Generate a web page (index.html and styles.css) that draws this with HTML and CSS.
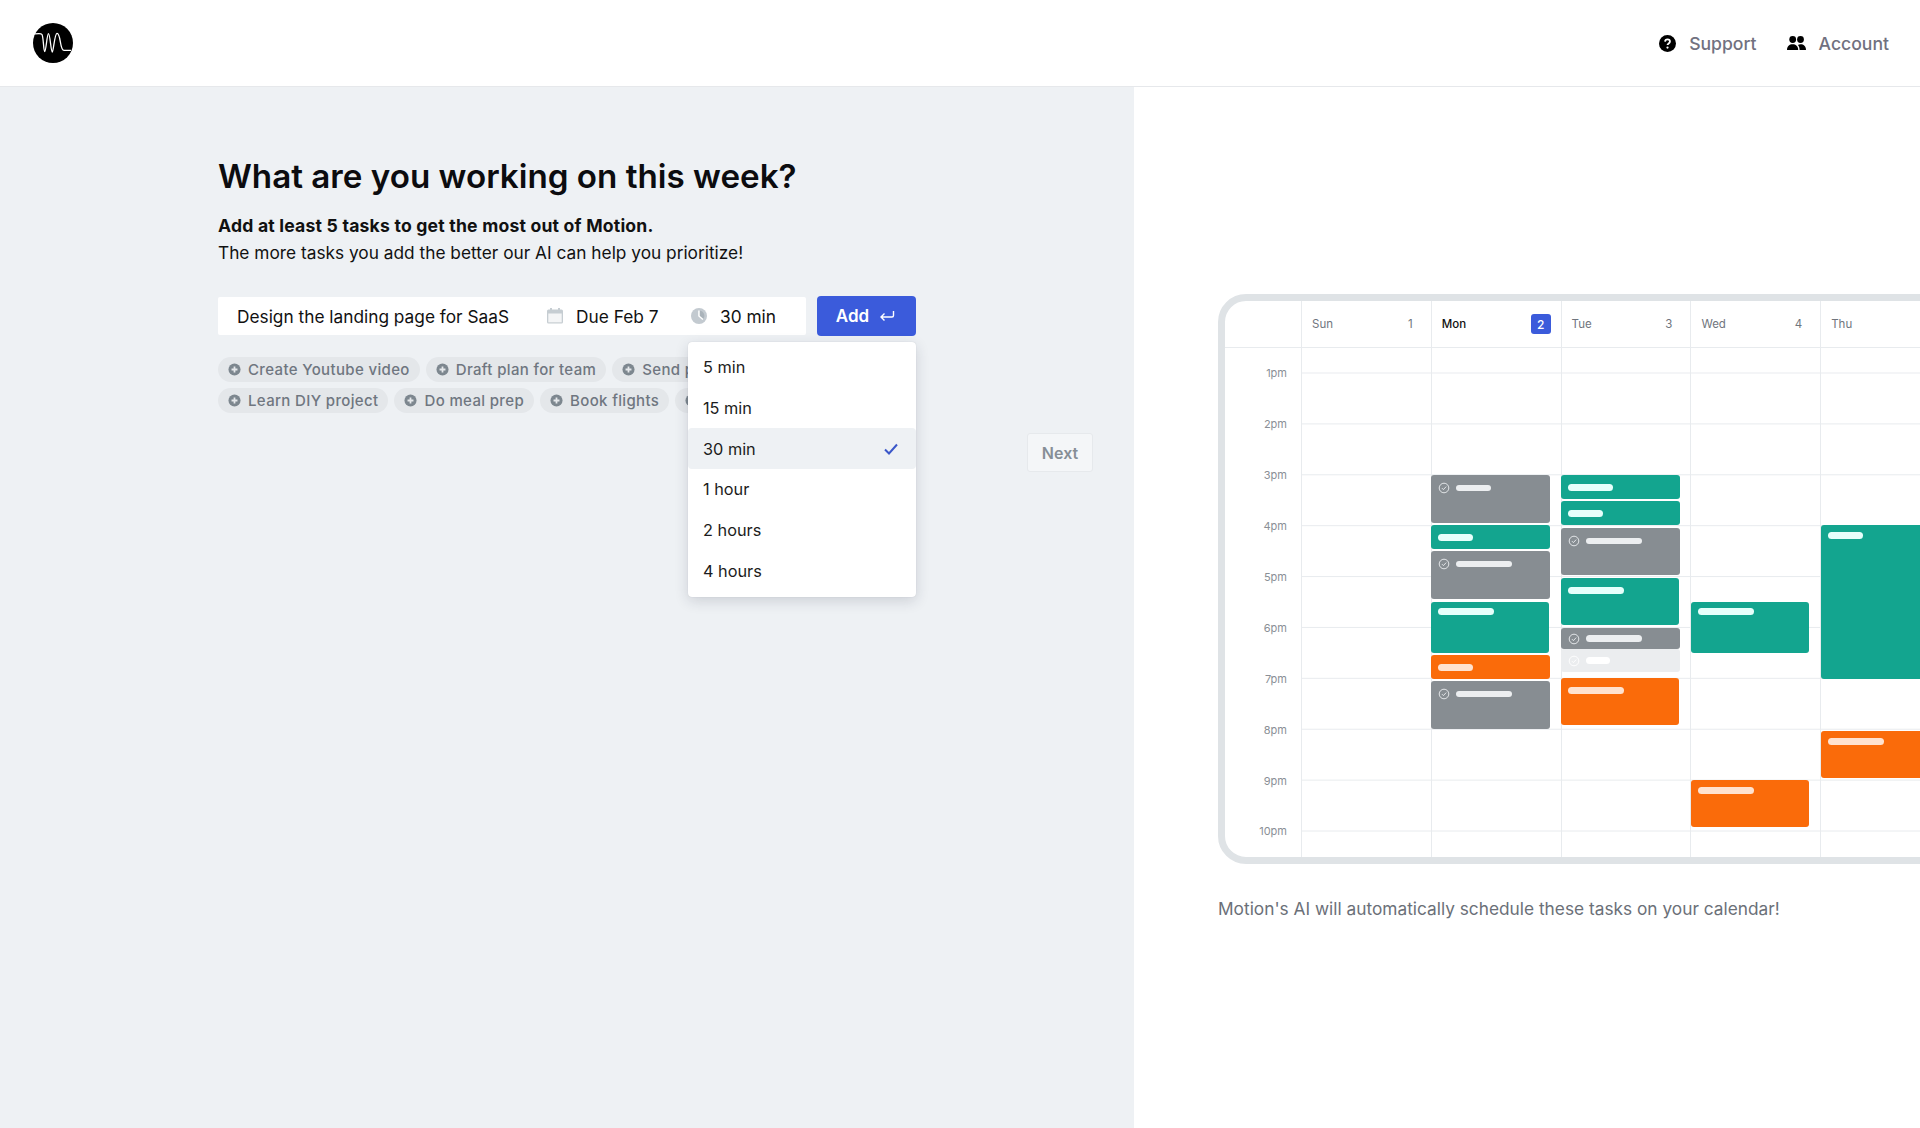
FILE: index.html
```html
<!DOCTYPE html>
<html lang="en">
<head>
<meta charset="utf-8">
<title>Motion</title>
<link rel="stylesheet" href="styles.css">
</head>
<body>
<svg class="defs" width="0" height="0" aria-hidden="true">
  <symbol id="plus" viewBox="0 0 14 14"><circle cx="7" cy="7" r="6.5" fill="#7d878f"/><path d="M7 3.8v6.4M3.8 7h6.4" stroke="#e5e8eb" stroke-width="1.9"/></symbol>
  <symbol id="done" viewBox="0 0 12 12"><circle cx="6" cy="6" r="4.8" fill="none" stroke="currentColor" stroke-width=".9"/><path d="M3.9 6.1l1.5 1.5 2.8-3" fill="none" stroke="currentColor" stroke-width=".9"/></symbol>
</svg>

<header class="topbar">
  <svg class="logo" viewBox="0 0 40 40" aria-label="Motion"><circle cx="20" cy="20" r="20" fill="#000"/><path d="M1.700 11C5 10.500 8 10 9 11.500c1.500 2.500 1.500 17 2.700 17 1.300 0 2.300-17.800 3.800-17.800s2.500 18.300 3.800 18.300c1.200 0 2.200-18.500 4.700-18.700 4-.3 2.500 17 7 17H38" fill="none" stroke="#fff" stroke-width="1.300"/></svg>
  <nav class="topnav">
    <a class="navlink">
      <svg class="navicon" viewBox="0 0 16 16"><circle cx="8" cy="8" r="8" fill="#000"/><path d="M5.700 6.200C5.800 4.900 6.800 4.200 8 4.200c1.300 0 2.300.8 2.300 1.900 0 1.900-2.300 1.700-2.300 3.400" fill="none" stroke="#fff" stroke-width="1.700"/><circle cx="8" cy="11.800" r="1.050" fill="#fff"/></svg>
      Support
    </a>
    <a class="navlink">
      <svg class="navicon wide" viewBox="0 0 19 16"><circle cx="5.700" cy="4" r="3.400" fill="#000"/><circle cx="13.500" cy="4" r="3.400" fill="#000"/><path d="M0 14.500c0-3.800 2.400-5.700 5.600-5.700s5.600 1.900 5.600 5.700z" fill="#000"/><path d="M12.600 14.500c0-2-.5-3.600-1.700-4.900.8-.5 1.700-.8 2.700-.8 3 0 5.400 1.900 5.400 5.700z" fill="#000"/></svg>
      Account
    </a>
  </nav>
</header>

<main class="page">
  <section class="left">
    <h1 class="title">What are you working on this week?</h1>
    <p class="lead"><strong>Add at least 5 tasks to get the most out of Motion.</strong></p>
    <p class="sub">The more tasks you add the better our AI can help you prioritize!</p>

    <div class="composer">
      <div class="field">
        <span class="field-text">Design the landing page for SaaS</span>
        <span class="meta meta-date">
          <svg class="metaicon" viewBox="0 0 16 16"><path d="M0 3A1.500 1.500 0 0 1 1.500 1.500H3V0h2v1.500h6V0h2v1.500h1.500A1.500 1.500 0 0 1 16 3v11a1.500 1.500 0 0 1-1.500 1.500h-13A1.500 1.500 0 0 1 0 14z" fill="#c6cdd2"/><rect x="1.300" y="5.500" width="13.400" height="8.800" fill="#f4f5f6"/></svg>
          Due Feb 7
        </span>
        <span class="meta meta-time">
          <svg class="metaicon" viewBox="0 0 16 16"><circle cx="8" cy="8" r="8" fill="#c3cad0"/><path d="M8 2.500V8l4 3.400" fill="none" stroke="#fff" stroke-width="1.600"/><path d="M8.800 2.500v5.300l3.700 3.100A5.500 5.500 0 0 0 8.800 2.500z" fill="#aab3ba"/></svg>
          30 min
        </span>
      </div>
      <button class="add" type="button">Add
        <svg class="enter" viewBox="0 0 16 14"><path d="M14.500 2v4.500a1.500 1.500 0 0 1-1.500 1.500H2M5.500 4.500L2 8l3.500 3.500" fill="none" stroke="#fff" stroke-width="1.400"/></svg>
      </button>
      <ul class="menu">
        <li class="menu-item">5 min</li>
        <li class="menu-item">15 min</li>
        <li class="menu-item selected">30 min
          <svg class="tick" viewBox="0 0 14 12"><path d="M1 6.500l4 4L13 1.500" fill="none" stroke="#3b57c9" stroke-width="2"/></svg>
        </li>
        <li class="menu-item">1 hour</li>
        <li class="menu-item">2 hours</li>
        <li class="menu-item">4 hours</li>
      </ul>
    </div>

    <div class="chips">
      <span class="chip"><svg class="plus"><use href="#plus"/></svg>Create Youtube video</span>
      <span class="chip"><svg class="plus"><use href="#plus"/></svg>Draft plan for team</span>
      <span class="chip"><svg class="plus"><use href="#plus"/></svg>Send pitch deck</span>
      <span class="chip"><svg class="plus"><use href="#plus"/></svg>Learn DIY project</span>
      <span class="chip"><svg class="plus"><use href="#plus"/></svg>Do meal prep</span>
      <span class="chip"><svg class="plus"><use href="#plus"/></svg>Book flights</span>
      <span class="chip"><svg class="plus"><use href="#plus"/></svg>Gym</span>
    </div>

    <div class="actions"><button class="next" type="button">Next</button></div>
  </section>

  <section class="right">
    <div class="calendar">
      <div class="cal-head">
        <div class="gutter-head"></div>
        <div class="head-cell"><span>Sun</span><span>1</span></div>
        <div class="head-cell today"><span>Mon</span><span class="badge">2</span></div>
        <div class="head-cell"><span>Tue</span><span>3</span></div>
        <div class="head-cell"><span>Wed</span><span>4</span></div>
        <div class="head-cell"><span>Thu</span><span>5</span></div>
      </div>
      <div class="cal-body">
        <div class="gutter">
          <span class="hour">1pm</span><span class="hour">2pm</span><span class="hour">3pm</span><span class="hour">4pm</span><span class="hour">5pm</span><span class="hour">6pm</span><span class="hour">7pm</span><span class="hour">8pm</span><span class="hour">9pm</span><span class="hour">10pm</span>
        </div>
        <div class="days">
          <div class="day"></div>
          <div class="day">
            <div class="event gray" style="top:127px;height:48px"><svg class="done"><use href="#done"/></svg><i class="bar b35"></i></div>
            <div class="event teal low" style="top:177px;height:24px"><i class="bar b35"></i></div>
            <div class="event gray" style="top:203px;height:48px"><svg class="done"><use href="#done"/></svg><i class="bar b56"></i></div>
            <div class="event teal narrow high" style="top:254px;height:51px"><i class="bar b56"></i></div>
            <div class="event orange low" style="top:307px;height:24px"><i class="bar b35"></i></div>
            <div class="event gray" style="top:333px;height:48px"><svg class="done"><use href="#done"/></svg><i class="bar b56"></i></div>
          </div>
          <div class="day">
            <div class="event teal low" style="top:127px;height:24px"><i class="bar b45"></i></div>
            <div class="event teal low" style="top:153px;height:24px"><i class="bar b35"></i></div>
            <div class="event gray" style="top:180px;height:47px"><svg class="done"><use href="#done"/></svg><i class="bar b56"></i></div>
            <div class="event teal narrow low" style="top:230px;height:47px"><i class="bar b56"></i></div>
            <div class="event gray slim" style="top:280px;height:21px"><svg class="done"><use href="#done"/></svg><i class="bar b56"></i></div>
            <div class="event ghost slim" style="top:301px;height:23px"><svg class="done"><use href="#done"/></svg><i class="bar b24"></i></div>
            <div class="event orange narrow low" style="top:330px;height:47px"><i class="bar b56"></i></div>
          </div>
          <div class="day inset">
            <div class="event teal narrow high" style="top:254px;height:51px"><i class="bar b56"></i></div>
            <div class="event orange narrow" style="top:432px;height:47px"><i class="bar b56"></i></div>
          </div>
          <div class="day inset">
            <div class="event teal wide" style="top:177px;height:154px"><i class="bar b35"></i></div>
            <div class="event orange wide" style="top:383px;height:47px"><i class="bar b56"></i></div>
          </div>
        </div>
      </div>
    </div>
    <p class="caption">Motion's AI will automatically schedule these tasks on your calendar!</p>
  </section>
</main>
</body>
</html>
```
FILE: styles.css
```css
* { box-sizing: border-box; }
html, body { margin: 0; height: 100%; overflow: hidden; }
body { font-family: Inter, "Liberation Sans", sans-serif; color: #111; background: #fff; display: flex; flex-direction: column; }
.defs { position: absolute; }

.topbar { flex: 0 0 87px; display: flex; align-items: center; justify-content: space-between; padding: 0 31px 0 33px; border-bottom: 1px solid #e6e8eb; }
.logo { width: 40px; height: 40px; display: block; }
.topnav { display: flex; gap: 30px; }
.navlink { display: flex; align-items: center; gap: 13px; font-size: 17.600px; font-weight: 500; color: #71717f; }
.navicon { width: 17px; height: 17px; }
.navicon.wide { width: 19px; }

.page { flex: 1; display: flex; min-height: 0; }
.left { flex: 0 0 1134px; background: #eef1f4; padding: 67px 0 0 218px; }
.title { margin: 0; font-size: 33.200px; line-height: 44px; font-weight: 600; color: #0c0c0f; }
.lead { margin: 14px 0 0; font-size: 17.600px; line-height: 27px; }
.lead strong { font-weight: 700; letter-spacing: .2px; }
.sub { margin: 0; font-size: 17.300px; line-height: 27px; }

.composer { position: relative; display: flex; align-items: center; width: 698px; margin-top: 30px; gap: 11px; }
.field { flex: 0 0 588px; height: 38px; background: #fff; border-radius: 2px; display: flex; align-items: center; padding-left: 19px; font-size: 17.300px; }
.field-text { flex: 0 0 310px; }
.meta { display: flex; align-items: center; gap: 13px; }
.meta-date { flex: 0 0 144px; }
.metaicon { width: 16px; height: 16px; }
.add { flex: 0 0 99px; height: 40px; border: 0; border-radius: 4px; background: #3b5bdb; color: #fff; font: 600 17px Inter, sans-serif; display: flex; align-items: center; justify-content: center; gap: 10px; padding: 0 2px 0 0; }
.enter { width: 16px; height: 14px; }

.menu { position: absolute; left: 470px; top: 46px; width: 228px; height: 255px; margin: 0; padding: 5px 0 0; list-style: none; background: #fff; border-radius: 4px; box-shadow: 0 4px 14px rgba(30, 40, 60, .16), 0 0 1px rgba(30, 40, 60, .2); z-index: 2; }
.menu-item { height: 40.700px; display: flex; align-items: center; justify-content: space-between; padding: 0 18px 0 15px; font-size: 16.300px; color: #1c1c20; }
.menu-item.selected { background: #eef1f4; border-radius: 4px; }
.tick { width: 14px; height: 12px; }

.chips { display: flex; flex-wrap: wrap; gap: 6px; width: 698px; margin-top: 21px; }
.chip { height: 25px; display: inline-flex; align-items: center; gap: 7px; padding: 0 10px; background: #e4e7ea; border-radius: 13px; font-size: 15px; font-weight: 500; letter-spacing: .35px; color: #6f7680; white-space: nowrap; }
.plus { width: 13px; height: 13px; }

.actions { display: flex; justify-content: flex-end; width: 875px; margin-top: 20px; }
.next { width: 66px; height: 39px; border: 1px solid #e6e9ec; border-radius: 3px; background: #f4f6f8; color: #868e96; font: 600 16px Inter, sans-serif; padding: 0; }

.right { flex: 1; min-width: 0; overflow: hidden; padding: 207px 0 0 84px; }
.calendar { width: 1000px; height: 570px; border: 7px solid #dfe3e6; border-radius: 28px; background: #fff; overflow: hidden; }
.cal-head { display: flex; height: 47px; border-bottom: 1px solid #e8ebee; }
.gutter-head { flex: 0 0 76px; }
.head-cell { flex: 0 0 129.800px; display: flex; align-items: center; justify-content: space-between; padding: 0 18px 0 10px; border-left: 1px solid #e8ebee; font-size: 11.500px; color: #70757d; }
.head-cell.today { color: #111; font-weight: 500; padding-right: 10px; }
.badge { width: 20px; height: 20px; border-radius: 3px; background: #3b5bdb; color: #fff; display: flex; align-items: center; justify-content: center; font-size: 12px; }
.cal-body { display: flex; height: 510px; }
.gutter { flex: 0 0 76px; display: flex; flex-direction: column; padding: 0 14px 0 0; }
.hour { flex: 0 0 50.900px; display: flex; align-items: center; justify-content: flex-end; font-size: 11px; color: #8a8f96; }
.days { flex: 1; display: flex; background-image: linear-gradient(#e8ebee 1px, transparent 1px); background-size: 100% 50.900px; background-position: 0 24.500px; }
.day { flex: 0 0 129.800px; position: relative; border-left: 1px solid #e8ebee; }

.event { position: absolute; left: -1px; width: 119px; border-radius: 3px; display: flex; align-items: flex-start; padding: 7px 0 0 7px; gap: 6px; }
.day.inset .event { left: 0; }
.event.narrow { width: 118px; }
.event.wide { width: 130px; }
.event.low { padding-top: 9px; }
.event.high { padding-top: 6px; }
.event.slim { align-items: center; padding-top: 0; }
.event.gray { background: #878d92; color: #eceef0; }
.event.teal { background: #13a58f; color: #e6fffb; }
.event.orange { background: #fa6b0a; color: #ffe2cf; }
.event.ghost { background: #ebedef; color: #fff; }
.done { width: 12px; height: 12px; flex: none; }
.bar { display: block; height: 6.500px; border-radius: 4px; background: currentColor; }
.gray .bar { margin-top: 2.500px; }
.slim .bar { margin-top: 0; }
.b24 { width: 24px; }
.b35 { width: 35px; }
.b45 { width: 45px; }
.b56 { width: 56px; }

.caption { margin: 33px 0 0; font-size: 17.300px; line-height: 24px; color: #6b7078; }
```
